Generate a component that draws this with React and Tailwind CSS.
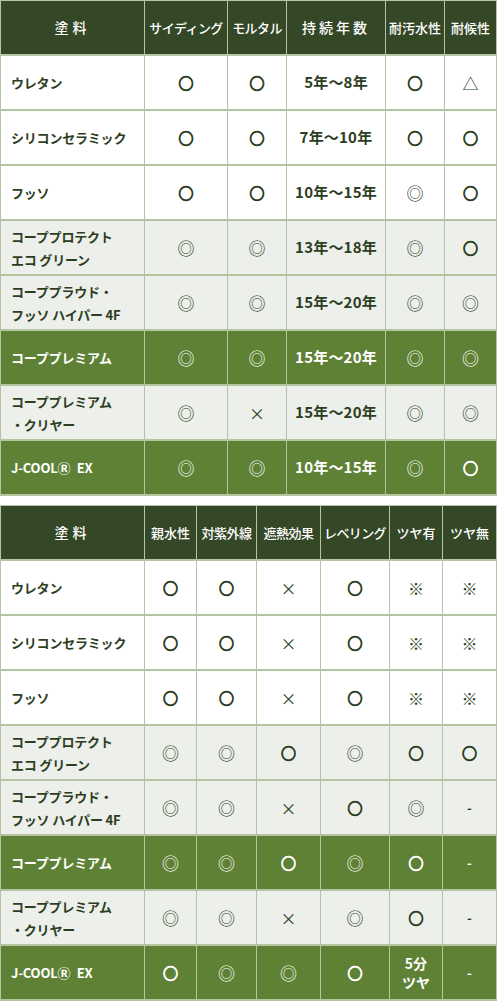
const FONT = { fontFamily: '"Noto Sans CJK JP", "Noto Sans", sans-serif' };

const HEAD = "bg-[#344726] text-white";
const ROW_BG = {
  w: "bg-white text-[#2d3e1f]",
  g: "bg-[#ecefea] text-[#2d3e1f]",
  d: "bg-[#5e8135] text-white",
};

const table1 = {
  cols: "grid-cols-[143px_83px_59px_99px_59px_1fr]",
  head: [
    { t: "塗料", cls: "tracking-[4px] text-[14px]" },
    { t: "サイディング", cls: "tracking-[-0.6px]" },
    { t: "モルタル", cls: "tracking-[-0.6px]" },
    { t: "持続年数", cls: "tracking-[3px] text-[14px]" },
    { t: "耐汚水性", cls: "" },
    { t: "耐候性", cls: "" },
  ],
  rows: [
    ["w", ["ウレタン"], ["○", "○", "5年〜8年", "○", "△"]],
    ["w", ["シリコンセラミック"], ["○", "○", "7年〜10年", "○", "○"]],
    ["w", ["フッソ"], ["○", "○", "10年〜15年", "◎", "○"]],
    ["g", ["コーププロテクト", "エコ グリーン"], ["◎", "◎", "13年〜18年", "◎", "○"]],
    ["g", ["コーププラウド・", "フッソ ハイパー 4F"], ["◎", "◎", "15年〜20年", "◎", "◎"]],
    ["d", ["コーププレミアム"], ["◎", "◎", "15年〜20年", "◎", "◎"]],
    ["g", ["コーププレミアム", "・クリヤー"], ["◎", "×", "15年〜20年", "◎", "◎"]],
    ["d", ["J-COOLⓇ\u2002EX"], ["◎", "◎", "10年〜15年", "◎", "○"]],
  ],
};

const table2 = {
  cols: "grid-cols-[143px_52px_60px_64px_69px_53px_1fr]",
  head: [
    { t: "塗料", cls: "tracking-[4px] text-[14px]" },
    { t: "親水性", cls: "" },
    { t: "対紫外線", cls: "tracking-[-0.5px]" },
    { t: "遮熱効果", cls: "tracking-[-0.5px]" },
    { t: "レベリング", cls: "tracking-[-0.6px]" },
    { t: "ツヤ有", cls: "" },
    { t: "ツヤ無", cls: "" },
  ],
  rows: [
    ["w", ["ウレタン"], ["○", "○", "×", "○", "※", "※"]],
    ["w", ["シリコンセラミック"], ["○", "○", "×", "○", "※", "※"]],
    ["w", ["フッソ"], ["○", "○", "×", "○", "※", "※"]],
    ["g", ["コーププロテクト", "エコ グリーン"], ["◎", "◎", "○", "◎", "○", "○"]],
    ["g", ["コーププラウド・", "フッソ ハイパー 4F"], ["◎", "◎", "×", "○", "◎", "-"]],
    ["d", ["コーププレミアム"], ["◎", "◎", "○", "◎", "○", "-"]],
    ["g", ["コーププレミアム", "・クリヤー"], ["◎", "◎", "×", "◎", "○", "-"]],
    ["d", ["J-COOLⓇ\u2002EX"], ["○", "◎", "◎", "○", "5分\nツヤ", "-"]],
  ],
};

const Cell = ({ value }) => {
  if (value === "○") {
    return (
      <span className="text-[15px] font-bold leading-none [-webkit-text-stroke:1px_currentColor]">
        ○
      </span>
    );
  }
  if (value === "◎") {
    return <span className="text-[17px] font-normal leading-none">◎</span>;
  }
  if (["△", "×", "※"].includes(value)) {
    return <span className="text-[16px] font-normal leading-none">{value}</span>;
  }
  if (value === "-") {
    return <span className="text-[13px] font-bold">-</span>;
  }
  if (value.includes("\n")) {
    return (
      <span className="text-[14px] font-bold leading-[19px] text-center">
        {value.split("\n").map((line, i) => (
          <span key={i} className="block">
            {line}
          </span>
        ))}
      </span>
    );
  }
  return <span className="text-[15px] font-bold tracking-[0.2px]">{value}</span>;
};

const Table = ({ data, className = "" }) => (
  <div className={`border-t border-x border-[#b5c5a3] ${className}`}>
    {/* Header */}
    <div className={`grid ${data.cols} h-[55px] border-b-2 border-[#b5c5a3] ${HEAD}`}>
      {data.head.map((h, i) => (
        <div
          key={i}
          className={`flex items-center justify-center text-[13px] font-medium ${
            i > 0 ? "border-l border-[#b5c5a3]" : ""
          } ${h.cls}`}
        >
          {h.t}
        </div>
      ))}
    </div>

    {/* Rows */}
    {data.rows.map(([bg, name, values], r) => (
      <div
        key={r}
        className={`grid ${data.cols} h-[55px] border-b-2 border-[#b5c5a3] ${ROW_BG[bg]}`}
      >
        <div className="flex flex-col justify-center pl-[10px] text-[13px] font-bold leading-[23px] tracking-[-0.2px]">
          {name.map((line, i) => (
            <span key={i} className="whitespace-pre">
              {line}
            </span>
          ))}
        </div>
        {values.map((v, i) => (
          <div
            key={i}
            className="flex items-center justify-center border-l border-[#b5c5a3]"
          >
            <Cell value={v} />
          </div>
        ))}
      </div>
    ))}
  </div>
);

export default function App() {
  return (
    <div className="w-[497px] bg-white" style={FONT}>
      <Table data={table1} />
      <Table data={table2} className="mt-[9px]" />
    </div>
  );
}
